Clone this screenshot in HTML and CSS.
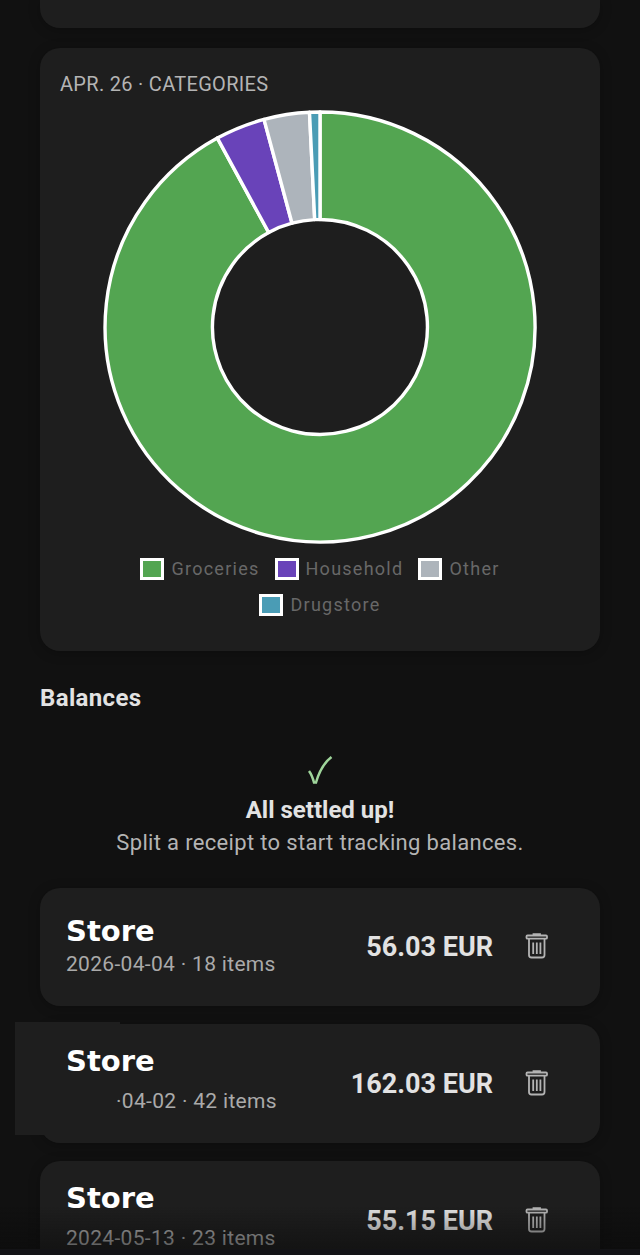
FILE: index.html
```html
<!DOCTYPE html>
<html lang="en">
<head>
  <meta charset="utf-8">
  <meta name="viewport" content="width=device-width, initial-scale=1">
  <title>Receipts</title>
  <link rel="stylesheet" href="styles.css">
</head>
<body>
  <svg class="sprite" aria-hidden="true">
    <symbol id="trash" viewBox="0 0 24 28">
      <path d="M8.500 2.500V1.200h6.500V2.500M2.500 2.500h18.500q1 0 1 1v1.200q0 1-1 1h-18.500q-1 0-1-1V3.500q0-1 1-1zM4 6v16q0 2.500 2.500 2.500h10.500q2.500 0 2.500-2.500V6M8.200 9.500v11.500M11.800 9.500v11.500M15.400 9.500v11.500"/>
    </symbol>
  </svg>

  <main class="page">
    <section class="card card-previous"></section>

    <section class="card chart-card">
      <h2 class="chart-title">Apr. 26 · Categories</h2>
      <svg class="donut" viewBox="-217 -217 434 434" role="img" aria-label="Spending by category">
        <path class="groceries" d="M0-215A215 215 0 1 1-102.600-188.900L-51.300-94.500A107.500 107.500 0 1 0 0-107.500Z"/>
        <path class="household" d="M-102.600-188.900A215 215 0 0 1-56-207.600L-28-103.800A107.500 107.500 0 0 0-51.300-94.500Z"/>
        <path class="other" d="M-56-207.600A215 215 0 0 1-10.500-214.700L-5.300-107.400A107.500 107.500 0 0 0-28-103.800Z"/>
        <path class="drugstore" d="M-10.500-214.700A215 215 0 0 1 0-215L0-107.500A107.500 107.500 0 0 0-5.300-107.400Z"/>
      </svg>
      <ul class="legend">
        <li><span class="swatch groceries"></span>Groceries</li>
        <li><span class="swatch household"></span>Household</li>
        <li><span class="swatch other"></span>Other</li>
        <li><span class="swatch drugstore"></span>Drugstore</li>
      </ul>
    </section>

    <h2 class="section-title">Balances</h2>
    <section class="settled">
      <svg class="check" viewBox="0 0 26 30" aria-hidden="true">
        <path d="M2 16Q5 20 7 27.500H9C12 17 18 7 24.500 2"/>
      </svg>
      <strong>All settled up!</strong>
      <p>Split a receipt to start tracking balances.</p>
    </section>

    <section class="receipts">
      <article class="card receipt receipt-compact">
        <div class="info">
          <h3>Store</h3>
          <p>2026-04-04 · 18 items</p>
        </div>
        <span class="amount">56.03 EUR</span>
        <button class="delete" type="button" aria-label="Delete receipt"><svg><use href="#trash"/></svg></button>
      </article>
      <article class="card receipt receipt-masked">
        <div class="info">
          <h3>Store</h3>
          <p>·04-02 · 42 items</p>
        </div>
        <span class="amount">162.03 EUR</span>
        <button class="delete" type="button" aria-label="Delete receipt"><svg><use href="#trash"/></svg></button>
      </article>
      <article class="card receipt">
        <div class="info">
          <h3>Store</h3>
          <p>2024-05-13 · 23 items</p>
        </div>
        <span class="amount">55.15 EUR</span>
        <button class="delete" type="button" aria-label="Delete receipt"><svg><use href="#trash"/></svg></button>
      </article>
    </section>
  </main>
  <div class="bottom-fade"></div>
</body>
</html>
```
FILE: styles.css
```css
* {
  box-sizing: border-box;
}

body {
  height: 100vh;
  margin: 0;
  overflow: hidden;
  background: #111;
  color: #e2e2e2;
  font-family: Roboto, sans-serif;
}

h2, h3, p, ul {
  margin: 0;
  padding: 0;
}

h2, p {
  letter-spacing: 0.015em;
}

.sprite {
  display: none;
}

.page {
  padding: 0 40px;
}

.card {
  background: #1e1e1e;
  border-radius: 20px;
  box-shadow: 0 2px 12px rgba(0, 0, 0, 0.25);
}

.card-previous {
  height: 28px;
  margin-bottom: 20px;
  border-radius: 0 0 20px 20px;
}

/* Category chart */
.chart-card {
  display: flex;
  flex-direction: column;
  align-items: center;
  padding: 24px 20px 34px;
}

.chart-title {
  align-self: stretch;
  color: #b4b4b4;
  font-size: 20px;
  font-weight: 400;
  line-height: 24px;
  text-transform: uppercase;
}

.donut {
  width: 100%;
  max-width: 434px;
  margin-top: 14px;
  stroke: #fff;
  stroke-width: 3.4;
  stroke-linejoin: round;
}

.groceries { fill: #53a551; background: #53a551; }
.household { fill: #6943b9; background: #6943b9; }
.other { fill: #adb4bb; background: #adb4bb; }
.drugstore { fill: #4a9cb5; background: #4a9cb5; }

.legend {
  display: flex;
  flex-wrap: wrap;
  justify-content: center;
  gap: 12px 15px;
  max-width: 400px;
  margin-top: 13px;
  color: #686868;
  font-size: 18px;
  line-height: 24px;
  letter-spacing: 0.07em;
  list-style: none;
}

.legend li {
  display: flex;
  align-items: center;
  gap: 7px;
}

.swatch {
  width: 24px;
  height: 22px;
  border: 3px solid #fff;
}

/* Balances */
.section-title {
  margin-top: 32px;
  font-size: 24px;
  font-weight: 700;
  line-height: 30px;
}

.settled {
  display: flex;
  flex-direction: column;
  align-items: center;
  margin: 42px 0 27px;
  text-align: center;
}

.check {
  width: 26px;
  height: 30px;
  fill: none;
  stroke: #9fd59b;
  stroke-width: 2.5;
}

.settled strong {
  margin-top: 10px;
  font-size: 24px;
  line-height: 30px;
}

.settled p {
  color: #b4b4b4;
  font-size: 22px;
  line-height: 36px;
}

/* Receipts */
.receipts {
  display: grid;
  gap: 18px;
}

.receipt {
  position: relative;
  display: flex;
  align-items: center;
  min-height: 119px;
  padding: 19px 51px 19px 26px;
}

.receipt-compact {
  min-height: 118px;
  padding-top: 25px;
  padding-bottom: 25px;
}

.info {
  flex: 1;
  align-self: flex-start;
}

.info h3 {
  margin-bottom: 10px;
  color: #fff;
  font: bold 29px/36px "DejaVu Sans", sans-serif;
}

.info p {
  color: #aaa;
  font-size: 21px;
  line-height: 24px;
}

.receipt-compact .info h3 {
  margin-bottom: 3px;
}

/* The masked date hangs over the card's left edge */
.receipt-masked::before {
  content: "";
  position: absolute;
  top: -2px;
  left: -25px;
  width: 105px;
  height: 113px;
  background: #1e1e1e;
}

.receipt-masked .info {
  position: relative;
}

.receipt-masked .info p {
  padding-left: 50px;
}

.amount {
  font-size: 27px;
  font-weight: 700;
}

.delete {
  margin-left: 32px;
  padding: 0;
  border: 0;
  background: none;
  cursor: pointer;
}

.delete svg {
  display: block;
  width: 24px;
  height: 28px;
  fill: none;
  stroke: #b4b4b4;
  stroke-width: 1.8;
}

.bottom-fade {
  position: fixed;
  inset: auto 0 0;
  height: 48px;
  border-bottom: 6px solid #131316;
  background: linear-gradient(transparent, rgba(10, 10, 10, 0.5));
  background-clip: padding-box;
  pointer-events: none;
}
```
